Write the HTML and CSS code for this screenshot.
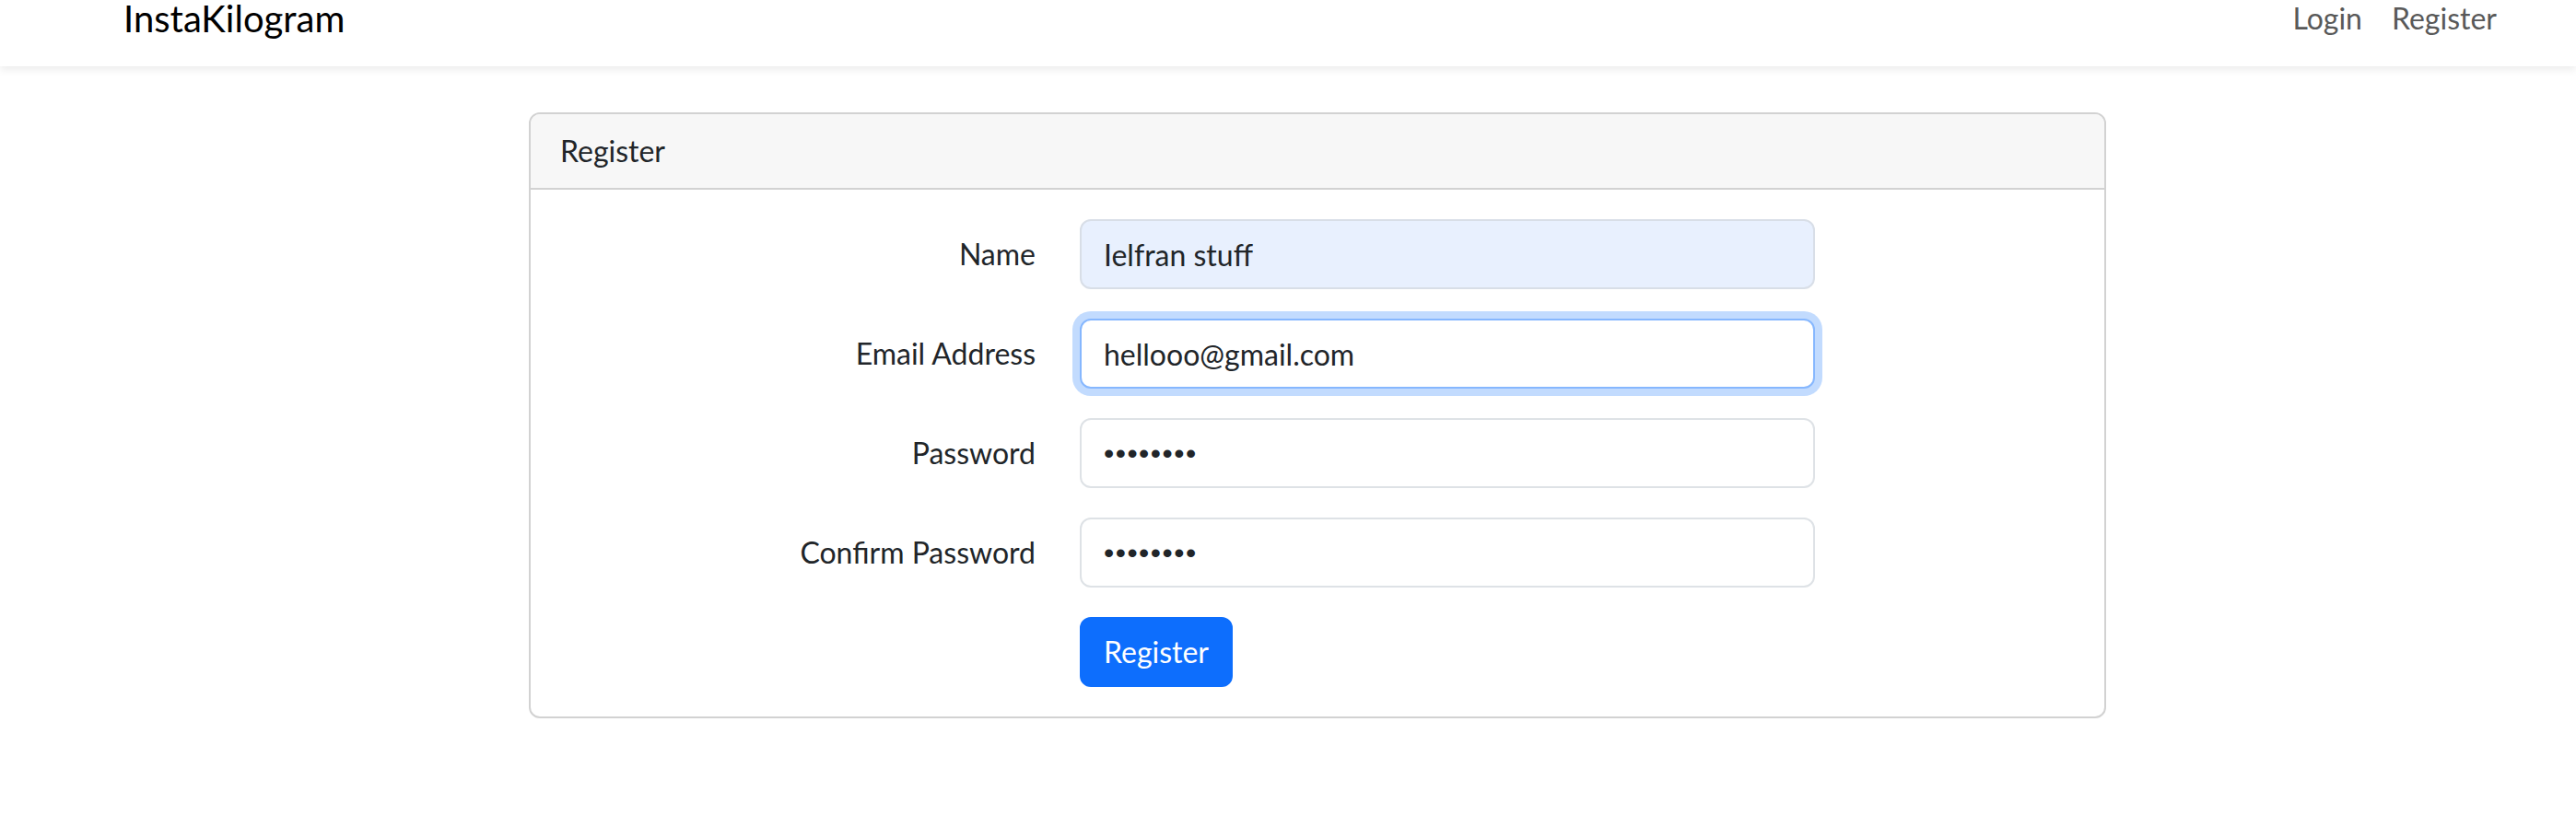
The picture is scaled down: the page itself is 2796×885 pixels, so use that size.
FILE: index.html
```html
<!DOCTYPE html>
<html lang="en">
<head>
<meta charset="utf-8">
<title>InstaKilogram - Register</title>
<link rel="stylesheet" href="styles.css">
</head>
<body>
<nav class="navbar">
  <div class="container nav-inner">
    <a class="brand" href="#">InstaKilogram</a>
    <ul class="nav-links">
      <li><a class="nav-link" href="#">Login</a></li>
      <li><a class="nav-link" href="#">Register</a></li>
    </ul>
  </div>
</nav>
<main class="main">
  <div class="container">
    <div class="card">
      <div class="card-header">Register</div>
      <div class="card-body">
        <form class="form">
          <div class="form-row">
            <label class="form-label" for="name">Name</label>
            <input class="form-control autofilled" id="name" type="text" value="Ielfran stuff">
          </div>
          <div class="form-row">
            <label class="form-label" for="email">Email Address</label>
            <input class="form-control focused" id="email" type="email" value="hellooo@gmail.com">
          </div>
          <div class="form-row">
            <label class="form-label" for="password">Password</label>
            <input class="form-control secret" id="password" type="password" value="password">
          </div>
          <div class="form-row">
            <label class="form-label" for="password-confirm">Confirm Password</label>
            <input class="form-control secret" id="password-confirm" type="password" value="password">
          </div>
          <div class="form-row form-row-last">
            <div class="form-spacer"></div>
            <div class="form-actions">
              <button class="btn-primary" type="submit">Register</button>
            </div>
          </div>
        </form>
      </div>
    </div>
  </div>
</main>
</body>
</html>
```

FILE: styles.css
```css
* {
  box-sizing: border-box;
}

html, body {
  margin: 0;
  padding: 0;
  background: #ffffff;
}

body {
  font-family: Lato, "Open Sans", "Noto Sans", sans-serif;
  font-size: 32px;
  line-height: 48px;
  color: #212529;
  overflow: hidden;
}

.container {
  width: 2640px;
  margin-left: 110px;
  padding: 0 24px;
}

/* Navbar */
.navbar {
  height: 72px;
  background: #ffffff;
  box-shadow: 0 4px 8px rgba(0, 0, 0, 0.075);
  position: relative;
}

.nav-inner {
  display: flex;
  align-items: flex-start;
  justify-content: space-between;
}

.brand {
  font-size: 40px;
  line-height: 40px;
  color: #000000;
  text-decoration: none;
}

.nav-links {
  display: flex;
  list-style: none;
  margin: 0;
  padding: 0;
}

.nav-link {
  display: block;
  padding: 0 16px;
  font-size: 32px;
  line-height: 40px;
  color: #595959;
  text-decoration: none;
}

/* Main */
.main {
  padding: 50px 0;
}

.card {
  width: 1712px;
  margin: 0 auto;
  border: 2px solid #d2d2d2;
  border-radius: 12px;
  background: #ffffff;
  overflow: hidden;
}

.card-header {
  padding: 16px 32px;
  background: #f7f7f7;
  border-bottom: 2px solid #d2d2d2;
  line-height: 48px;
}

.card-body {
  padding: 32px;
}

.form-row {
  display: grid;
  grid-template-columns: 516px 798px;
  column-gap: 48px;
  margin-bottom: 32px;
}

.form-row-last {
  margin-bottom: 0;
}

.form-label {
  padding: 14px 0;
  text-align: right;
  line-height: 48px;
  color: #212529;
}

.form-control {
  display: block;
  width: 100%;
  height: 76px;
  padding: 12px 24px;
  font-family: inherit;
  font-size: 32px;
  line-height: 48px;
  color: #212529;
  background: #ffffff;
  border: 2px solid #dee2e6;
  border-radius: 12px;
  outline: none;
  margin: 0;
}

.form-control.secret {
  font-family: "Liberation Sans", Arial, sans-serif;
  letter-spacing: 1.5px;
}

.form-control.autofilled {
  background: #e8f0fe;
  border-color: #d8dee7;
}

.form-control.focused {
  border-color: #86b7fe;
  box-shadow: 0 0 0 8px rgba(13, 110, 253, 0.25);
}

.form-actions {
  display: flex;
}

.btn-primary {
  padding: 12px 24px;
  font-family: inherit;
  font-size: 32px;
  line-height: 48px;
  color: #ffffff;
  background: #0d6efd;
  border: 2px solid #0d6efd;
  border-radius: 12px;
  cursor: pointer;
}
```
